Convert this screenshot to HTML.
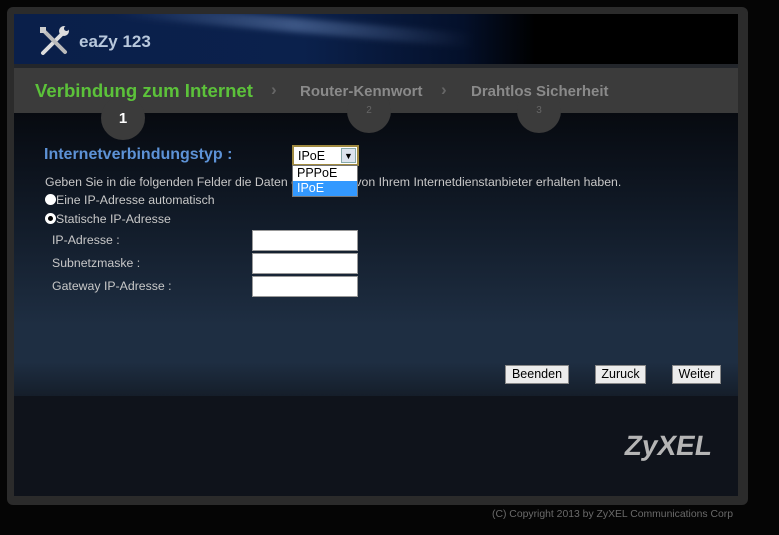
<!DOCTYPE html>
<html><head><meta charset="utf-8"><style>
*{margin:0;padding:0;box-sizing:border-box}
body{width:779px;height:535px;background:#050505;font-family:"Liberation Sans",Arial,sans-serif;position:relative;overflow:hidden}
.frame{position:absolute;left:7px;top:7px;width:741px;height:498px;background:#2b2b2b;border-radius:6px}
.inner{position:absolute;left:14px;top:14px;width:724px;height:482px;background:#0f131b;overflow:hidden}
.hdr{position:absolute;left:0;top:0;width:724px;height:54px;background:linear-gradient(90deg,#0a1f4a 0%,#0b214c 40%,#04102a 62%,#000 72%,#000 100%);}
.hdr:before{content:"";position:absolute;left:100px;top:4px;width:360px;height:14px;background:linear-gradient(90deg,rgba(90,120,170,0),rgba(120,150,200,.45),rgba(90,120,170,0));transform:rotate(5deg);filter:blur(3px)}
.hdr:after{content:"";position:absolute;left:0;right:0;bottom:0;height:4px;background:#23262b}
.nav{position:absolute;left:0;top:54px;width:724px;height:45px;background:#3b3b3b}
.circ{position:absolute;width:44px;height:44px;border-radius:22px;background:#3b3b3b;text-align:center}
.content{position:absolute;left:0;top:99px;width:724px;height:283px;background:linear-gradient(#070a10 0%,#121c2a 40%,#1e2e42 75%,#1e2e42 88%,#151e2a 100%)}
.t{position:absolute;color:#c8c8c8;font-size:12.3px;white-space:nowrap}
.inp{position:absolute;left:238px;width:106px;height:21px;background:#fff;border:1px solid #999}
.btn{position:absolute;top:351px;height:19px;background:#ececec;border:1px solid #888;font-size:12.5px;color:#000;text-align:center;line-height:17px}
.radio{display:inline-block;width:11px;height:11px;border-radius:6px;background:#fff;vertical-align:-1px}
</style></head><body>
<div class="frame"></div>
<div class="inner">
 <div class="hdr">
  <svg style="position:absolute;left:24px;top:11px" width="32" height="32" viewBox="0 0 32 32">
   <path d="M5 28 L26 7" stroke="#ddd" stroke-width="4" stroke-linecap="round"/>
   <path d="M5 5 L27 27" stroke="#bbb" stroke-width="4" stroke-linecap="round"/>
   <circle cx="26" cy="6" r="5" fill="#ddd"/><circle cx="28.5" cy="3.5" r="2.5" fill="#0a1f4a"/>
   <rect x="2" y="2" width="6" height="6" fill="#ccc"/>
  </svg>
  <div style="position:absolute;left:65px;top:18px;color:#b8c8dc;font-weight:bold;font-size:17px">eaZy 123</div>
 </div>
 <div class="nav"></div>
 <div class="content"></div>
 <div class="circ" style="left:87px;top:82px;color:#fff;font-weight:bold;font-size:15px;line-height:46px">1</div>
 <div class="circ" style="left:333px;top:75px;color:#666;font-size:10px;line-height:44px">2</div>
 <div class="circ" style="left:503px;top:75px;color:#666;font-size:10px;line-height:44px">3</div>
 <div style="position:absolute;left:0;top:54px;width:724px;height:45px">
  <span style="position:absolute;left:21px;top:12px;font-weight:bold;font-size:18.6px;color:#5cc23a">Verbindung zum Internet</span>
  <span style="position:absolute;left:257px;top:12px;color:#666;font-size:17px;font-weight:bold">&#8250;</span>
  <span style="position:absolute;left:286px;top:15px;font-weight:bold;font-size:15px;color:#8a8a8a">Router-Kennwort</span>
  <span style="position:absolute;left:427px;top:12px;color:#666;font-size:17px;font-weight:bold">&#8250;</span>
  <span style="position:absolute;left:457px;top:15px;font-weight:bold;font-size:15px;color:#8a8a8a">Drahtlos Sicherheit</span>
 </div>
 <div class="t" style="left:30px;top:132px;font-size:16px;font-weight:bold;color:#5d92d6">Internetverbindungstyp :</div>
 <div class="t" style="left:31px;top:161px">Geben Sie in die folgenden Felder die Daten ein, die Sie von Ihrem Internetdienstanbieter erhalten haben.</div>
 <div class="t" style="left:31px;top:179px"><span class="radio"></span>Eine IP-Adresse automatisch</div>
 <div class="t" style="left:31px;top:198px"><span class="radio" style="border:3px solid #fff;background:#000"></span>Statische IP-Adresse</div>
 <div class="t" style="left:38px;top:219px">IP-Adresse :</div>
 <div class="t" style="left:38px;top:242px">Subnetzmaske :</div>
 <div class="t" style="left:38px;top:265px">Gateway IP-Adresse :</div>
 <div class="inp" style="top:216px"></div>
 <div class="inp" style="top:239px"></div>
 <div class="inp" style="top:262px"></div>
 <div style="position:absolute;left:278px;top:131px;width:67px;height:21px;background:#fff;border:2px solid #a08a40;font-size:12.5px;padding:2px 4px">IPoE
  <div style="position:absolute;right:1px;top:1px;width:15px;height:15px;background:#dde4ee;border:1px solid #8aa;font-size:9px;text-align:center;line-height:14px">&#9660;</div></div>
 <div style="position:absolute;left:278px;top:151px;width:66px;height:32px;background:#fff;border:1px solid #777;font-size:12.5px">
  <div style="padding:0 4px;height:15px">PPPoE</div>
  <div style="padding:0 4px;height:15px;background:#3399ff;color:#fff">IPoE</div>
 </div>
 <div class="btn" style="left:491px;width:64px">Beenden</div>
 <div class="btn" style="left:581px;width:51px">Zuruck</div>
 <div class="btn" style="left:658px;width:49px">Weiter</div>
 <div style="position:absolute;left:611px;top:416px;font-size:28px;font-weight:bold;color:#b5b5b5;transform:skewX(-10deg)">ZyXEL</div>
</div>
<div style="position:absolute;left:492px;top:509px;font-size:10.4px;color:#6a6a6a">(C) Copyright 2013 by ZyXEL Communications Corp</div>
</body></html>
